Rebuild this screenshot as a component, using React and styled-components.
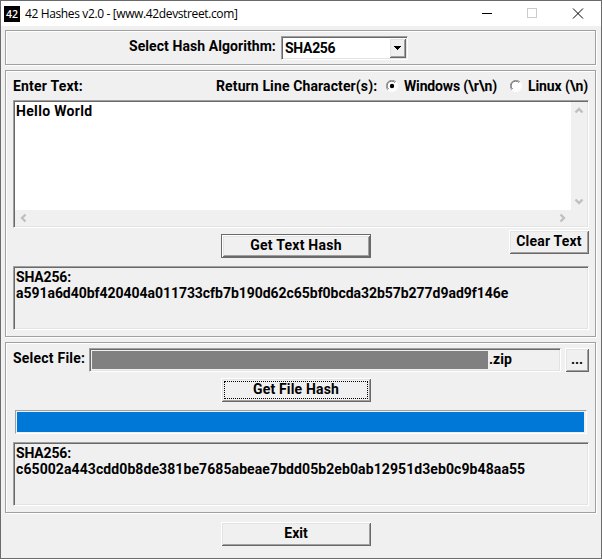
import React from 'react';
import styled, { createGlobalStyle, css } from 'styled-components';

const GlobalStyle = createGlobalStyle`
  * {
    box-sizing: border-box;
  }
  body {
    margin: 0;
    overflow: hidden;
  }
`;

const raised = css`
  box-shadow: inset 1px 1px 0 #fff, inset -1px -1px 0 #696969,
    inset 2px 2px 0 #e3e3e3, inset -2px -2px 0 #a0a0a0;
`;

const sunken = css`
  border: 1px solid;
  border-color: #a0a0a0 #fff #fff #a0a0a0;
  box-shadow: inset 1px 1px 0 #696969, inset -1px -1px 0 #e3e3e3;
`;

const Window = styled.div`
  display: flex;
  flex-direction: column;
  width: 602px;
  height: 559px;
  border: 1px solid #6b6b6d;
  background: #f0f0f0;
  color: #000;
  font: 700 14px/16px Roboto, 'Liberation Sans', sans-serif;
  white-space: pre;
`;

const TitleBar = styled.div`
  display: flex;
  align-items: center;
  height: 25px;
  padding-left: 3px;
  background: #fff;
`;

const AppIcon = styled.div`
  width: 16px;
  height: 16px;
  background: #000;
  color: #fff;
  font: 600 10.5px/16px 'Open Sans', sans-serif;
  text-align: center;
`;

const Title = styled.div`
  flex: 1;
  margin-left: 5px;
  font: 12px/16px 'Open Sans', sans-serif;
  letter-spacing: -0.37px;
`;

const Controls = styled.svg`
  display: block;
  width: 137px;
  height: 25px;
`;

const Content = styled.div`
  display: flex;
  flex-direction: column;
  align-items: center;
  gap: 5px;
  padding: 4px 5px 0 4px;
`;

const Group = styled.div`
  width: 591px;
  height: ${p => p.$height}px;
  padding: 0 5px 0 7px;
  border: 1px solid #a0a0a0;
  box-shadow: 1px 1px 0 #fff, inset 1px 1px 0 #fff;
`;

const Row = styled.div`
  display: flex;
  align-items: flex-start;
  height: ${p => p.$height}px;
  padding-top: ${p => p.$top || 0}px;
  padding-left: ${p => p.$left || 0}px;
`;

const Label = styled.span`
  flex: none;
  width: ${p => (p.$width ? `${p.$width}px` : 'auto')};
  margin-top: ${p => p.$top || 0}px;
  letter-spacing: ${p => p.$spacing || 0}px;
`;

const Combo = styled.div`
  ${sunken}
  display: flex;
  justify-content: space-between;
  width: 127px;
  height: 24px;
  padding: 1px;
  background: #fff;
`;

const ComboValue = styled.span`
  margin: 2px 0 0 2px;
  letter-spacing: -0.3px;
`;

const ComboArrow = styled.svg`
  width: 17px;
  height: 20px;
  background: #f0f0f0;
  ${raised}
`;

const RadioDot = styled.svg`
  width: 12px;
  height: 12px;
  margin: 2px 6px 0 0;
`;

const TextArea = styled.div`
  ${sunken}
  display: grid;
  grid-template: 108px 16px / 556px 16px;
  width: 576px;
  height: 128px;
  padding: 1px;
  background: #f0f0f0;
`;

const TextBody = styled.div`
  padding: 1px 1px;
  background: #fff;
  letter-spacing: 0.33px;
`;

const ScrollBar = styled.div`
  display: flex;
  flex-direction: ${p => (p.$vertical ? 'column' : 'row')};
  justify-content: space-between;
`;

const Arrow = styled.svg`
  width: 16px;
  height: 16px;
  fill: none;
  stroke: #bfbfbf;
  stroke-width: 2.3;
  transform: rotate(${p => p.$turn || 0}deg);
`;

const Button = styled.div`
  display: flex;
  justify-content: center;
  flex: none;
  width: ${p => p.$width || 150}px;
  height: 24px;
  padding-top: ${p => (p.$default ? 2 : 3)}px;
  margin: ${p => p.$margin || 0};
  background: #f0f0f0;
  letter-spacing: ${p => p.$spacing || 0}px;
  ${raised}
  ${p => p.$default && css`border: 1px solid #696969;`}
`;

const FocusRect = styled.div`
  width: 144px;
  height: 18px;
  border: 1px dotted #000;
  line-height: 14px;
  text-align: center;
`;

const Output = styled.div`
  ${sunken}
  width: 576px;
  height: 64px;
  padding: 2px 2px;
`;

const Line = styled.div`
  letter-spacing: ${p => p.$spacing || 0}px;
`;

const FileField = styled.div`
  ${sunken}
  display: flex;
  width: 472px;
  height: 24px;
  padding: 2px 0 0 2px;
`;

const Redacted = styled.div`
  width: 396px;
  height: 18px;
  margin-right: 1px;
  background: #808080;
`;

const Progress = styled.div`
  width: 572px;
  height: 24px;
  margin: 8px 0 8px 2px;
  padding: 1px 2px 1px 1px;
  border: 1px solid;
  border-color: #a0a0a0 #fff #fff #a0a0a0;
`;

const ProgressFill = styled.div`
  height: 20px;
  background: #0078d7;
`;

const Radio = ({ checked }) => (
  <RadioDot viewBox="0 0 12 12">
    <circle cx="6" cy="6" r="5" fill="#fff" />
    <path d="M1.9 10.1A5.5 5.5 0 0 1 10.1 1.9" fill="none" stroke="#a0a0a0" />
    <path d="M2.5 9A4.5 4.5 0 0 1 9 2.5" fill="none" stroke="#696969" />
    <path d="M10.1 1.9A5.5 5.5 0 0 1 1.9 10.1" fill="none" stroke="#fff" />
    {checked && <circle cx="6" cy="6" r="2.2" />}
  </RadioDot>
);

const Chevron = ({ turn }) => (
  <Arrow viewBox="0 0 16 16" $turn={turn}>
    <path d="M4.5 10.5L8 7L11.5 10.5" />
  </Arrow>
);

const App = () => (
  <React.Fragment>
    <GlobalStyle />
    <Window>
      <TitleBar>
        <AppIcon>42</AppIcon>
        <Title>42 Hashes v2.0 - [www.42devstreet.com]</Title>
        <Controls viewBox="0 0 137 25" fill="none" shapeRendering="crispEdges">
          <path d="M18 12.5h10" stroke="#000" />
          <rect x="63.5" y="7.5" width="9" height="9" stroke="#ccc" />
          <path d="M109 7.5l10 10M119 7.5l-10 10" stroke="#000" shapeRendering="auto" />
        </Controls>
      </TitleBar>
      <Content>
        <Group $height={35}>
          <Row $height={33} $top={5} $left={116}>
            <Label $width={152} $top={2} $spacing={0.07}>Select Hash Algorithm:</Label>
            <Combo>
              <ComboValue>SHA256</ComboValue>
              <ComboArrow viewBox="0 0 17 20" shapeRendering="crispEdges">
                <path d="M5 8h7L8.5 12z" />
              </ComboArrow>
            </Combo>
          </Row>
        </Group>
        <Group $height={267}>
          <Row $height={29} $top={7}>
            <Label $width={203} $spacing={0.2}>Enter Text:</Label>
            <Label $width={170} $spacing={0.12}>Return Line Character(s):</Label>
            <Radio checked />
            <Label $width={106} $spacing={-0.15}>{'Windows (\\r\\n)'}</Label>
            <Radio />
            <Label $spacing={-0.1}>{'Linux (\\n)'}</Label>
          </Row>
          <TextArea>
            <TextBody>Hello World</TextBody>
            <ScrollBar $vertical>
              <Chevron />
              <Chevron turn={180} />
            </ScrollBar>
            <ScrollBar>
              <Chevron turn={-90} />
              <Chevron turn={90} />
            </ScrollBar>
          </TextArea>
          <Row $height={38} $top={2} $left={208}>
            <Button $default $margin="4px 138px 0 0" $spacing={0.25}>Get Text Hash</Button>
            <Button $width={80} $spacing={0.2}>Clear Text</Button>
          </Row>
          <Output>
            <Line $spacing={-0.15}>SHA256:</Line>
            <Line $spacing={-0.04}>a591a6d40bf420404a011733cfb7b190d62c65bf0bcda32b57b277d9ad9f146e</Line>
          </Output>
        </Group>
        <Group $height={171}>
          <Row $height={35} $top={5}>
            <Label $width={76} $top={2} $spacing={0.22}>Select File:</Label>
            <FileField>
              <Redacted />
              <Label>.zip</Label>
            </FileField>
            <Button $width={24} $margin="0 0 0 4px">...</Button>
          </Row>
          <Row $height={24} $left={208}>
            <Button $spacing={0.17}>
              <FocusRect>Get File Hash</FocusRect>
            </Button>
          </Row>
          <Progress>
            <ProgressFill />
          </Progress>
          <Output>
            <Line $spacing={-0.15}>SHA256:</Line>
            <Line $spacing={0.09}>c65002a443cdd0b8de381be7685abeae7bdd05b2eb0ab12951d3eb0c9b48aa55</Line>
          </Output>
        </Group>
        <Button $margin="4px 9px 0 0">Exit</Button>
      </Content>
    </Window>
  </React.Fragment>
);

export default App;
